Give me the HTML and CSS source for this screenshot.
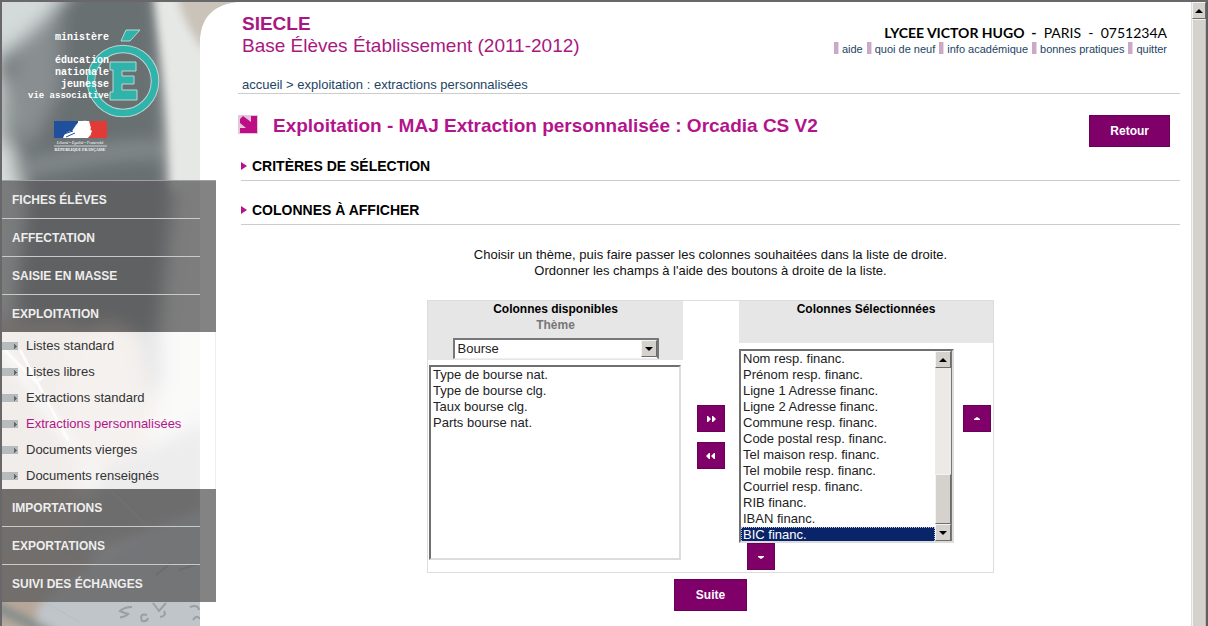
FILE: index.html
```html
<!DOCTYPE html>
<html lang="fr">
<head>
<meta charset="utf-8">
<title>SIECLE - Base Élèves Établissement</title>
<link rel="stylesheet" href="styles.css">
</head>
<body>
<aside class="sidebar">
  <svg class="photo" viewBox="2 2 238 624" preserveAspectRatio="xMinYMin slice" aria-hidden="true">
    <defs>
      <filter id="soft" x="-30%" y="-30%" width="160%" height="160%"><feGaussianBlur stdDeviation="9"/></filter>
      <filter id="fine" x="-30%" y="-30%" width="160%" height="160%"><feGaussianBlur stdDeviation="4"/></filter>
      <clipPath id="frame"><path d="M0 0H240V2C214 3 200 18 200 42V626H0Z"/></clipPath>
    </defs>
    <g clip-path="url(#frame)">
      <rect width="240" height="626" fill="#e4e4e2"/>
      <g filter="url(#soft)">
        <path d="M60 -20H158L164 60L172 200L160 320L140 350L10 370L25 200L5 130L-5 50Z" fill="#696f72"/>
        <path d="M-20 -20H75C55 15 25 40 -20 70Z" fill="#d3dad9"/>
        <path d="M15 50L60 10V90L30 150L5 110Z" fill="#898e90"/>
        <path d="M-20 60C15 100 8 150 25 200L-20 340Z" fill="#dbe1df"/>
        <ellipse cx="5" cy="115" rx="8" ry="35" fill="#9ba1a1"/>
        <path d="M10 172C70 158 120 148 162 150" fill="none" stroke="#979e9f" stroke-width="9"/>
        <path d="M-20 320H75L100 370L80 480L110 640H-20Z" fill="#b7a79b"/>
        <ellipse cx="108" cy="395" rx="48" ry="72" fill="#cdb7ac"/>
        <path d="M140 350L160 320L162 380L150 400Z" fill="#84898c"/>
        <path d="M100 470L210 420V520L60 560Z" fill="#a4a4a5"/>
      </g>
      <g filter="url(#fine)">
        <path d="M154 -10C160 50 170 90 171 190H205V30L240 5V-10Z" fill="#e6e8e5"/>
        <path d="M176 -10H250L203 50C190 32 180 15 176 -10Z" fill="#c9c3b9"/>
        <path d="M38 606C90 560 150 530 210 510V640H35Z" fill="#c0c5ca"/>
        <path d="M-5 606L55 636" stroke="#7e8a88" stroke-width="9"/>
        <path d="M0 345L80 455" stroke="#dedbd6" stroke-width="9"/>
      </g>
      <path d="M0 345L36 382L43 377M20 350L68 440" fill="none" stroke="#efeeea" stroke-width="3"/>
      <path d="M44 602L80 622M110 490L185 562" fill="none" stroke="#b8bfc3" stroke-width="1"/>
      <g fill="none" stroke="#9a9fa5" stroke-width="2">
        <path d="M132 607q-8 0-12 4q4 2 8 3q-4 4-8 3M147 615q-8-2-5 6q5 1 6-3M153 603l6 8l7-8M164 611q3 5-4 6M190 607q8-3 9 3M193 620q4-6 7-1M156 575l15-12M179 570l18-6"/>
      </g>
    </g>
  </svg>

  <div class="brand">
    <svg class="logo" viewBox="0 0 200 180" role="img" aria-label="Ministère éducation nationale jeunesse vie associative">
      <circle cx="123" cy="81" r="32" fill="none" stroke="#b9d8d5" stroke-width="8.500"/>
      <circle cx="123" cy="81" r="32" fill="none" stroke="#2fb3aa" stroke-width="6.500"/>
      <path d="M126 30H140L130 41H121Z" fill="#2fb3aa" stroke="#b9d8d5"/>
      <path d="M110 62H136V71H122V76H134V84H122V90H137V100H110V92H113V70H110Z" fill="#2fb3aa" stroke="#b9d8d5"/>
      <g class="logo-text" text-anchor="end">
        <text x="109" y="40">ministère</text>
        <text x="109" y="63">éducation</text>
        <text x="109" y="75">nationale</text>
        <text x="109" y="87">jeunesse</text>
        <text x="109" y="98" class="logo-small">vie associative</text>
      </g>
      <path d="M54 121H78V138H54Z" fill="#20509c"/>
      <path d="M78 121H107V138H78Z" fill="#fff"/>
      <path d="M89 121H107V138H88L91 134L89 131L91 128Z" fill="#e23a35"/>
      <path d="M63 138Q64 132 72 131L76 125Q80 120 87 121Q90 124 89 128L92 131L90 136L84 138Z" fill="#fff"/>
      <path d="M64 134L73 131M66 137L75 133" stroke="#20509c"/>
      <text x="80" y="144" class="motto" text-anchor="middle">Liberté • Égalité • Fraternité</text>
      <path d="M54 146H107" stroke="#cfd2d3"/>
      <text x="80" y="151" class="republic" text-anchor="middle">RÉPUBLIQUE FRANÇAISE</text>
    </svg>
  </div>

  <nav class="menu">
    <a href="#">FICHES ÉLÈVES</a>
    <a href="#">AFFECTATION</a>
    <a href="#">SAISIE EN MASSE</a>
    <a href="#">EXPLOITATION</a>
    <div class="submenu">
      <a href="#">Listes standard</a>
      <a href="#">Listes libres</a>
      <a href="#">Extractions standard</a>
      <a href="#" class="current">Extractions personnalisées</a>
      <a href="#">Documents vierges</a>
      <a href="#">Documents renseignés</a>
    </div>
    <a href="#">IMPORTATIONS</a>
    <a href="#">EXPORTATIONS</a>
    <a href="#">SUIVI DES ÉCHANGES</a>
  </nav>
</aside>

<main class="content">
  <header class="top">
    <div class="app-name"><strong>SIECLE</strong><span>Base Élèves Établissement (2011-2012)</span></div>
    <div class="account">
      <p class="school"><b>LYCEE VICTOR HUGO&nbsp; -</b>&nbsp; PARIS&nbsp; -&nbsp; 0751234A</p>
      <nav class="tools">
        <a href="#">aide</a><a href="#">quoi de neuf</a><a href="#">info académique</a><a href="#">bonnes pratiques</a><a href="#">quitter</a>
      </nav>
    </div>
  </header>
  <nav class="crumbs"><a href="#">accueil</a> &gt; <a href="#">exploitation : extractions personnalisées</a></nav>

  <div class="title-row">
    <svg class="title-icon" viewBox="0 0 20 19" aria-hidden="true"><rect width="20" height="19" fill="#e3c5dc"/><path d="M2 4L5 1L13 7V1H19V18H2V13H8L2 8Z" fill="#bd0e85"/></svg>
    <h1>Exploitation - MAJ Extraction personnalisée : Orcadia CS V2</h1>
    <button class="action" type="button">Retour</button>
  </div>

  <h2>CRITÈRES DE SÉLECTION</h2>
  <h2>COLONNES À AFFICHER</h2>

  <form class="picker">
    <p class="hint">Choisir un thème, puis faire passer les colonnes souhaitées dans la liste de droite.<br>Ordonner les champs à l'aide des boutons à droite de la liste.</p>
    <div class="panel">
      <section class="available">
        <div class="panel-head">
          <label for="available">Colonnes disponibles</label>
          <label for="theme" class="theme-label">Thème</label>
          <div class="combo">
            <select id="theme"><option>Bourse</option></select>
            <span class="win-button"><svg viewBox="0 0 8 4"><path d="M0 0H8L4 4Z"/></svg></span>
          </div>
        </div>
        <div class="listbox list-left">
          <select id="available" size="12">
            <option>Type de bourse nat.</option>
            <option>Type de bourse clg.</option>
            <option>Taux bourse clg.</option>
            <option>Parts bourse nat.</option>
          </select>
        </div>
      </section>
      <div class="transfer">
        <button class="move" type="button" aria-label="Ajouter"><svg viewBox="0 0 10 6"><path d="M1 0H2L5 3L2 6H1ZM6 0H7L10 3L7 6H6Z"/></svg></button>
        <button class="move" type="button" aria-label="Retirer"><svg viewBox="0 0 10 6"><path d="M4 0H3L0 3L3 6H4ZM9 0H8L5 3L8 6H9Z"/></svg></button>
      </div>
      <section class="selected">
        <div class="panel-head"><label for="selected">Colonnes Sélectionnées</label></div>
        <div class="selected-row">
          <div class="listbox list-right">
            <select id="selected" size="12">
              <option>Nom resp. financ.</option>
              <option>Prénom resp. financ.</option>
              <option>Ligne 1 Adresse financ.</option>
              <option>Ligne 2 Adresse financ.</option>
              <option>Commune resp. financ.</option>
              <option>Code postal resp. financ.</option>
              <option>Tel maison resp. financ.</option>
              <option>Tel mobile resp. financ.</option>
              <option>Courriel resp. financ.</option>
              <option>RIB financ.</option>
              <option>IBAN financ.</option>
              <option selected>BIC financ.</option>
            </select>
            <div class="bar">
              <span class="win-button"><svg viewBox="0 0 8 4"><path d="M0 4H8L4 0Z"/></svg></span>
              <span class="track"></span>
              <span class="thumb"></span>
              <span class="win-button"><svg viewBox="0 0 8 4"><path d="M0 0H8L4 4Z"/></svg></span>
            </div>
          </div>
          <button class="move" type="button" aria-label="Monter"><svg viewBox="0 0 10 6"><path d="M2 4V3L5 1L8 3V4Z"/></svg></button>
        </div>
        <button class="move move-down" type="button" aria-label="Descendre"><svg viewBox="0 0 10 6"><path d="M2 2V3L5 5L8 3V2Z"/></svg></button>
      </section>
    </div>
    <button class="action" type="button">Suite</button>
  </form>
</main>

<div class="page-bar" aria-hidden="true">
  <span class="win-button"><svg viewBox="0 0 8 4"><path d="M0 4H8L4 0Z"/></svg></span>
  <span class="thumb"></span>
</div>
</body>
</html>
```

FILE: styles.css
```css
* { box-sizing: border-box; }

body {
  margin: 0;
  min-height: 100vh;
  display: flex;
  border: solid #68676a;
  border-width: 2px 0 0 2px;
  background: #fff;
  color: #111;
  font: 13px/16px "Liberation Sans", Arial, sans-serif;
  overflow: hidden;
}

a { color: inherit; text-decoration: none; }
p, h1, h2 { margin: 0; }
button { font: inherit; cursor: pointer; }

/* Left column */
.sidebar { position: relative; flex: none; width: 214px; }
.photo { position: absolute; top: 0; left: 0; width: 238px; height: 100%; }
.brand, .menu { position: relative; }
.brand { height: 178px; overflow: hidden; }
.logo { display: block; width: 200px; height: 180px; margin: -2px 0 0 -2px; }
.logo-text { fill: #fff; font: bold 10px "Liberation Mono", monospace; }
.logo-small { font-size: 9px; }
.motto { fill: #fff; font: italic 4px "Liberation Serif", serif; }
.republic { fill: #fff; font: bold 4px "Liberation Serif", serif; }

.menu { border-top: 1px solid #a0a0a0; }
.menu > a {
  display: block;
  height: 38px;
  padding-left: 10px;
  background: linear-gradient(#c9cbcb, #c9cbcb) 0 100% / 198px 1px no-repeat, rgba(92, 92, 93, .76);
  color: #eee;
  font-weight: bold;
  font-size: 12px;
  line-height: 38px;
}
.menu > a:nth-child(4), .menu > a:last-child { height: 37px; background: rgba(92, 92, 93, .76); }
.submenu { padding-top: 1px; background: rgba(255, 255, 255, .8); border-right: 1px solid #eee; }
.submenu a {
  display: flex;
  align-items: center;
  gap: 8px;
  height: 26px;
  color: #333;
}
.submenu a::before {
  content: "";
  width: 16px;
  height: 8px;
  background: conic-gradient(from 225deg at 100% 50%, #666 90deg, transparent 0) 12px 2px / 3px 5px no-repeat, #b6bbbd;
}
.submenu .current { color: #b3148c; }

/* Main column */
.content { flex: 1; min-width: 0; padding: 11px 11px 0 22px; }
.top { display: flex; justify-content: space-between; padding: 0 13px 0 4px; }
.app-name {
  display: flex;
  flex-direction: column;
  color: #a8187f;
  font-size: 19px;
  line-height: 22px;
}
.account { padding-top: 11px; text-align: right; }
.school { color: #000; font: 14px/18px Lato, sans-serif; }
.tools { display: flex; justify-content: flex-end; gap: 4px; color: #234464; font-size: 11px; line-height: 14px; }
.tools a { display: flex; gap: 3px; }
.tools a::before { content: ""; width: 4px; height: 12px; background: #c9a9c5; border-right: 1px solid #e6d8e4; }
.crumbs { margin-top: 20px; padding-left: 4px; border-bottom: 1px solid #ccc; color: #234464; }

.title-row { display: flex; align-items: flex-start; padding: 21px 10px 0 0; }
.title-icon { width: 20px; height: 19px; margin-right: 15px; }
h1 { flex: 1; color: #b3148c; font-size: 19px; line-height: 22px; }
h2 {
  display: flex;
  align-items: center;
  gap: 5px;
  height: 44px;
  margin-left: 3px;
  padding-top: 15px;
  border-bottom: 1px solid #ccc;
  color: #000;
  font-size: 14px;
}
.title-row + h2 { height: 34px; padding-top: 5px; }
h2::before { content: ""; border: solid transparent; border-width: 4px 0 4px 6px; border-left-color: #b3148c; }

.action {
  min-width: 73px;
  height: 32px;
  padding: 0 20px;
  border: 1px solid #6c0058;
  background: #80006a;
  color: #fff;
  font-size: 12px;
  font-weight: bold;
}

/* Column picker */
.picker { display: flex; flex-direction: column; align-items: center; margin-left: 3px; }
.hint { padding: 22px 0 21px; text-align: center; }
.panel {
  display: grid;
  grid-template-columns: 255px 56px 254px;
  margin-bottom: 6px;
  padding-bottom: 2px;
  border: 1px solid #ddd;
}
.panel-head {
  display: flex;
  flex-direction: column;
  align-items: center;
  background: #e6e6e6;
  color: #000;
  font-size: 12px;
  font-weight: bold;
}
.available .panel-head { height: 59px; margin-bottom: 5px; }
.selected .panel-head { height: 42px; margin-bottom: 6px; }
.theme-label { color: #777; }

select {
  appearance: none;
  margin: 0;
  padding: 0;
  border: 0;
  border-radius: 0;
  outline: 0;
  background: #fff;
  color: #222;
  font: inherit;
}
.combo {
  display: flex;
  width: 206px;
  height: 21px;
  margin-top: 5px;
  border: 2px solid #77777a;
  border-bottom: 1px solid #eee;
  background: #fff;
  font-size: 13px;
  font-weight: normal;
}
.combo select { flex: 1; padding-left: 3px; }
.listbox {
  display: flex;
  border: 2px solid;
  border-color: #707070 #dcdcdc #dcdcdc #707070;
  background: #fff;
}
.listbox select { flex: 1; height: 100%; overflow: hidden; scrollbar-width: none; }
.listbox option { height: 16px; min-height: 16px; padding: 0 2px; line-height: 16px; }
.listbox option:checked {
  background: #0a246a linear-gradient(#0a246a, #0a246a);
  color: #fff;
  outline: 1px dotted #b8c2dd;
  outline-offset: -1px;
}
.list-left { width: 252px; height: 195px; margin-left: 1px; }
.list-right { width: 215px; height: 194px; }

.win-button {
  flex: none;
  display: flex;
  align-items: center;
  justify-content: center;
  width: 16px;
  height: 17px;
  border: 1px solid;
  border-color: #f4f4f4 #6c6c6c #6c6c6c #f4f4f4;
  background: #d5d2cd;
}
.win-button svg { width: 8px; height: 4px; fill: #000; }
.bar { display: flex; flex-direction: column; width: 17px; background: #eceae7; border-right: 1px solid #777; }
.track { flex: 1; }
.thumb {
  height: 50px;
  border: 1px solid;
  border-color: #f4f4f4 #6c6c6c #6c6c6c #f4f4f4;
  background: #d5d2cd;
}

.transfer { display: flex; flex-direction: column; align-items: center; gap: 10px; padding-top: 104px; }
.selected-row { display: flex; align-items: flex-start; gap: 9px; }
.selected-row .move { margin-top: 56px; }
.move {
  display: flex;
  align-items: center;
  justify-content: center;
  width: 28px;
  height: 27px;
  padding: 0;
  border: 1px solid #6c0058;
  background: #80006a;
}
.move svg { width: 10px; height: 6px; fill: #fff; }
.move-down { margin-left: 8px; }

/* Window scroll bar */
.page-bar {
  flex: none;
  display: flex;
  flex-direction: column;
  width: 17px;
  border-left: 1px solid #ddd;
  border-right: 2px solid #5f5f62;
  background: #d5d2cd;
}
.page-bar .win-button { width: 14px; }
.page-bar .thumb { flex: 1; border-bottom: 0; border-right-color: #bbb; }
```
